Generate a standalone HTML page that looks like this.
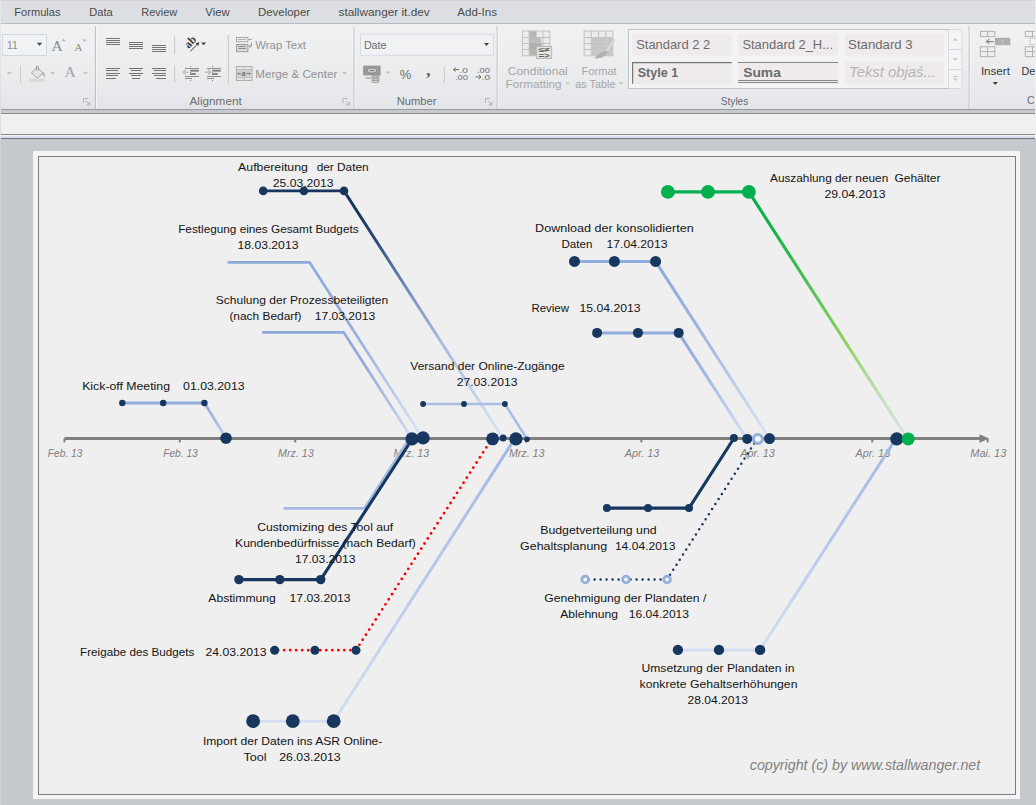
<!DOCTYPE html>
<html><head><meta charset="utf-8"><title>Timeline</title>
<style>
html,body{margin:0;padding:0;}
body{width:1036px;height:805px;overflow:hidden;background:#c5c8cd;font-family:"Liberation Sans",sans-serif;position:relative;}
.abs{position:absolute;}
#tabs{left:0;top:0;width:1036px;height:23px;background:linear-gradient(#d2d3d5 0,#d2d3d5 1px,#dddfe3 1px,#dbdee2);}
#rib{left:0;top:23px;width:1036px;height:86px;background:linear-gradient(#f0f1f3,#eceef0 40%,#e6e8eb 85%,#e2e4e8);border-top:1px solid #b8bcc4;box-sizing:border-box;}
#ribb{left:0;top:109px;width:1036px;height:5px;background:linear-gradient(#999ca2 0,#999ca2 20%,#c4c8ce 20%,#c8ccd2 80%,#8a8c90 80%);}
#fbar{left:0;top:114px;width:1036px;height:20px;background:#f0f0f0;}
#fbb{left:0;top:134px;width:1036px;height:5px;background:linear-gradient(#85878c 0,#85878c 20%,#f2f2f3 20%,#f2f2f3 40%,#dcdff0 40%,#dcdff0 80%,#707070 80%);}
#sheet{left:33px;top:151px;width:987px;height:648px;background:#f4f4f4;}
#chartbox{left:38px;top:156px;width:978px;height:639px;box-sizing:border-box;border:1px solid #7c7c7c;background:#efefef;}
#ledge{left:0;top:0;width:1px;height:805px;background:linear-gradient(#e6e8ea 0,#dcdde0 139px,#cdd0d4 139px);}
#redge{left:1035px;top:0;width:1px;height:139px;background:#eef0f3;}
svg.chart{position:absolute;left:0;top:0;}
svg text{font-family:"Liberation Sans",sans-serif;}
svg text.sf{font-family:"Liberation Serif",serif;}

</style></head><body>
<div class="abs" id="tabs"></div>
<div class="abs" id="rib"></div>
<div class="abs" id="ribb"></div>
<div class="abs" id="fbar"></div>
<div class="abs" id="fbb"></div>
<div class="abs" id="sheet"></div>
<div class="abs" id="chartbox"></div>
<svg class="chart" width="1036" height="140" viewBox="0 0 1036 140" fill="none"><text x="14.3" y="15.7" textLength="46.2" lengthAdjust="spacingAndGlyphs" font-size="11" fill="#4b4b4b" >Formulas</text><text x="89.3" y="15.7" textLength="23.4" lengthAdjust="spacingAndGlyphs" font-size="11" fill="#4b4b4b" >Data</text><text x="141.3" y="15.7" textLength="35.9" lengthAdjust="spacingAndGlyphs" font-size="11" fill="#4b4b4b" >Review</text><text x="205.3" y="15.7" textLength="24.6" lengthAdjust="spacingAndGlyphs" font-size="11" fill="#4b4b4b" >View</text><text x="258.0" y="15.7" textLength="52.1" lengthAdjust="spacingAndGlyphs" font-size="11" fill="#4b4b4b" >Developer</text><text x="338.5" y="15.7" textLength="91.2" lengthAdjust="spacingAndGlyphs" font-size="11" fill="#4b4b4b" >stallwanger it.dev</text><text x="457.3" y="15.7" textLength="39.7" lengthAdjust="spacingAndGlyphs" font-size="11" fill="#4b4b4b" >Add-Ins</text><path d="M95.4 26.0 V109.0" stroke="#b4b8be" stroke-width="1"/><path d="M96.4 25.0 V109.0" stroke="#f6f7f8" stroke-width="1"/><path d="M354.2 26.0 V109.0" stroke="#b4b8be" stroke-width="1"/><path d="M355.2 25.0 V109.0" stroke="#f6f7f8" stroke-width="1"/><path d="M497.2 26.0 V109.0" stroke="#b4b8be" stroke-width="1"/><path d="M498.2 25.0 V109.0" stroke="#f6f7f8" stroke-width="1"/><path d="M969.2 26.0 V109.0" stroke="#b4b8be" stroke-width="1"/><path d="M970.2 25.0 V109.0" stroke="#f6f7f8" stroke-width="1"/><rect x="2.5" y="34.5" width="44.0" height="21.0" fill="#f1f2f4" stroke="#d0d7e3" stroke-width="1" rx="0" /><path d="M2.5 34.5 V55.5" stroke="#d5dbe6" stroke-width="1"/><text x="7.0" y="48.7" textLength="10.6" lengthAdjust="spacingAndGlyphs" font-size="10.7" fill="#8c8c8c" >11</text><path d="M36.8 42.8 L42.2 42.8 L39.5 45.8 Z" fill="#404040"/><text x="51.6" y="50.7" class="sf" font-size="15.5" fill="#8a8a8a">A</text><path d="M61.4 41.2 L65.8 41.2 L63.6 38.8 Z" fill="#b4b4b4"/><text x="74.6" y="50.7" class="sf" font-size="11" fill="#8a8a8a">A</text><path d="M82.2 39.4 L86.6 39.4 L84.4 41.8 Z" fill="#b4b4b4"/><path d="M6.9 71.9 L11.9 71.9 L9.4 74.7 Z" fill="#c4c4c4"/><path d="M20.5 66.0 V83.0" stroke="#cdcdcd" stroke-width="1"/><g stroke="#a2a2a2" stroke-width="1" fill="#e4e4e4"><path d="M31.5 72.8 L37.2 67.2 L43.2 73 L37.6 78.2 Z"/><path d="M36.3 70.5 V66.6 Q37.4 65.2 38.5 66.6 V70.5" fill="none"/></g><path d="M43 72 Q45.5 73 44.6 77.5 Q42.6 76 43 72 Z" fill="#a8a8a8"/><rect x="29.0" y="78.6" width="15.8" height="3.2" fill="#ddd6da" stroke="none" stroke-width="1" rx="0" /><path d="M49.9 71.9 L54.9 71.9 L52.4 74.7 Z" fill="#c4c4c4"/><text x="64.6" y="76.7" class="sf" font-size="15.5" fill="#a4a4a4">A</text><path d="M83.1 71.9 L88.1 71.9 L85.6 74.7 Z" fill="#c4c4c4"/><path d="M83.5 103.0 V98.5 H88.0" fill="none" stroke="#b4b4b4" stroke-width="1"/><path d="M86.0 101.0 L89.5 104.5 M89.8 101.7 V104.8 H86.7" fill="none" stroke="#b0b0b0" stroke-width="1"/><path d="M106.2 38.5 H120.1" stroke="#747474" stroke-width="1" shape-rendering="crispEdges"/><path d="M106.2 40.6 H120.1" stroke="#747474" stroke-width="1" shape-rendering="crispEdges"/><path d="M106.2 42.6 H120.1" stroke="#747474" stroke-width="1" shape-rendering="crispEdges"/><path d="M106.2 44.6 H120.1" stroke="#747474" stroke-width="1" shape-rendering="crispEdges"/><path d="M129.0 42.6 H142.9" stroke="#747474" stroke-width="1" shape-rendering="crispEdges"/><path d="M129.0 44.6 H142.9" stroke="#747474" stroke-width="1" shape-rendering="crispEdges"/><path d="M129.0 46.6 H142.9" stroke="#747474" stroke-width="1" shape-rendering="crispEdges"/><path d="M129.0 48.6 H142.9" stroke="#747474" stroke-width="1" shape-rendering="crispEdges"/><path d="M152.0 45.5 H166.1" stroke="#747474" stroke-width="1" shape-rendering="crispEdges"/><path d="M152.0 47.5 H166.1" stroke="#747474" stroke-width="1" shape-rendering="crispEdges"/><path d="M152.0 49.5 H166.1" stroke="#747474" stroke-width="1" shape-rendering="crispEdges"/><path d="M152.0 51.5 H166.1" stroke="#747474" stroke-width="1" shape-rendering="crispEdges"/><path d="M106.2 68.5 H120.1" stroke="#747474" stroke-width="1" shape-rendering="crispEdges"/><path d="M106.2 70.9 H117.8" stroke="#747474" stroke-width="1" shape-rendering="crispEdges"/><path d="M106.2 73.3 H120.1" stroke="#747474" stroke-width="1" shape-rendering="crispEdges"/><path d="M106.2 75.8 H117.8" stroke="#747474" stroke-width="1" shape-rendering="crispEdges"/><path d="M106.2 78.2 H115.5" stroke="#747474" stroke-width="1" shape-rendering="crispEdges"/><path d="M129.0 68.5 H142.9" stroke="#747474" stroke-width="1" shape-rendering="crispEdges"/><path d="M130.9 70.9 H141.0" stroke="#747474" stroke-width="1" shape-rendering="crispEdges"/><path d="M129.0 73.3 H142.9" stroke="#747474" stroke-width="1" shape-rendering="crispEdges"/><path d="M130.9 75.8 H141.0" stroke="#747474" stroke-width="1" shape-rendering="crispEdges"/><path d="M131.7 78.2 H140.2" stroke="#747474" stroke-width="1" shape-rendering="crispEdges"/><path d="M152.0 68.5 H166.1" stroke="#747474" stroke-width="1" shape-rendering="crispEdges"/><path d="M154.4 70.9 H166.1" stroke="#747474" stroke-width="1" shape-rendering="crispEdges"/><path d="M152.0 73.3 H166.1" stroke="#747474" stroke-width="1" shape-rendering="crispEdges"/><path d="M154.4 75.8 H166.1" stroke="#747474" stroke-width="1" shape-rendering="crispEdges"/><path d="M156.4 78.2 H166.1" stroke="#747474" stroke-width="1" shape-rendering="crispEdges"/><path d="M174.6 36.5 V54.3" stroke="#c6c6c6" stroke-width="1"/><path d="M174.6 65.0 V82.8" stroke="#c6c6c6" stroke-width="1"/><text transform="translate(188.4,48.9) rotate(-45)" class="sf" font-size="11.5" font-weight="bold" fill="#3a3a3a">ab</text><path d="M190.3 51.4 L198.6 43" stroke="#3a3a3a" stroke-width="1" fill="none"/><path d="M199.3 42.3 L195.6 43.2 L198.4 46 Z" fill="#3a3a3a"/><path d="M201.1 42.5 L206.1 42.5 L203.6 45.3 Z" fill="#444"/><path d="M190.5 66 V81" stroke="#7c7c7c" stroke-width="1" stroke-dasharray="1 1" shape-rendering="crispEdges"/><path d="M185.0 68.1 H198.8" stroke="#8e8e8e" stroke-width="1" shape-rendering="crispEdges"/><path d="M190.4 70.7 H198.8" stroke="#7a7a7a" stroke-width="1.8"/><path d="M190.4 74.0 H195.8" stroke="#7a7a7a" stroke-width="1.8"/><path d="M185.0 76.5 H198.8" stroke="#8e8e8e" stroke-width="1" shape-rendering="crispEdges"/><path d="M185.0 78.7 H192.0" stroke="#8e8e8e" stroke-width="1" shape-rendering="crispEdges"/><path d="M183.4 72.3 H188.6 M185.8 69.9 L183.2 72.3 L185.8 74.7" stroke="#c2c2c2" stroke-width="1.6" fill="none"/><path d="M212.5 66 V81" stroke="#7c7c7c" stroke-width="1" stroke-dasharray="1 1" shape-rendering="crispEdges"/><path d="M207.0 68.1 H220.8" stroke="#8e8e8e" stroke-width="1" shape-rendering="crispEdges"/><path d="M212.4 70.7 H220.8" stroke="#7a7a7a" stroke-width="1.8"/><path d="M212.4 74.0 H217.8" stroke="#7a7a7a" stroke-width="1.8"/><path d="M207.0 76.5 H220.8" stroke="#8e8e8e" stroke-width="1" shape-rendering="crispEdges"/><path d="M207.0 78.7 H214.0" stroke="#8e8e8e" stroke-width="1" shape-rendering="crispEdges"/><path d="M205.0 72.3 H210.2 M208.0 69.9 L210.6 72.3 L208.0 74.7" stroke="#c2c2c2" stroke-width="1.6" fill="none"/><path d="M228.3 35.0 V84.4" stroke="#c6c6c6" stroke-width="1"/><rect x="236.5" y="37.5" width="11.4" height="4.2" fill="#f0f0f0" stroke="#a8a8a8" stroke-width="1" rx="0" /><path d="M238.2 39.6 H246.4" stroke="#b0b0b0" stroke-width="1" shape-rendering="crispEdges"/><path d="M247.9 39.6 H251.8" stroke="#a8a8a8" stroke-width="1" shape-rendering="crispEdges"/><rect x="236.5" y="44.5" width="11.4" height="7.2" fill="#dadada" stroke="#9c9c9c" stroke-width="1" rx="0" /><path d="M238.3 46.8 H246.0" stroke="#8c8c8c" stroke-width="1" shape-rendering="crispEdges"/><path d="M238.3 48.8 H246.0" stroke="#8c8c8c" stroke-width="1" shape-rendering="crispEdges"/><path d="M251.6 42.5 V46.3 H249 M250.6 44.8 L249 46.3 L250.6 47.8" stroke="#9a9a9a" stroke-width="1" fill="none"/><text x="255.3" y="49.0" textLength="50.7" lengthAdjust="spacingAndGlyphs" font-size="10.8" fill="#929292" >Wrap Text</text><rect x="236.4" y="66.6" width="15.6" height="13.8" fill="#e9e9e9" stroke="#a8a8a8" stroke-width="1" rx="0" /><path d="M236.4 69.8 H252.0" stroke="#b8b8b8" stroke-width="1" shape-rendering="crispEdges"/><path d="M236.4 77.2 H252.0" stroke="#b8b8b8" stroke-width="1" shape-rendering="crispEdges"/><path d="M244.1 66.6 V69.8" stroke="#b8b8b8" stroke-width="1"/><path d="M244.1 77.2 V80.4" stroke="#b8b8b8" stroke-width="1"/><rect x="236.9" y="70.3" width="14.6" height="6.4" fill="#cdcdcd" stroke="none" stroke-width="1" rx="0" /><text x="241.6" y="76.2" class="sf" font-size="8" font-weight="bold" fill="#707070">a</text><path d="M237.6 73.5 H240.6 M246.6 73.5 H250.6" stroke="#808080" stroke-width="1"/><path d="M237.4 73.5 L239 72.3 V74.7 Z M250.9 73.5 L249.3 72.3 V74.7 Z" fill="#808080"/><text x="255.3" y="77.9" textLength="82.0" lengthAdjust="spacingAndGlyphs" font-size="10.8" fill="#929292" >Merge &amp; Center</text><path d="M342.1 71.9 L347.1 71.9 L344.6 74.7 Z" fill="#c4c4c4"/><text x="189.5" y="104.6" textLength="52.2" lengthAdjust="spacingAndGlyphs" font-size="10.6" fill="#6e6e6e" >Alignment</text><path d="M343.0 103.0 V98.5 H347.5" fill="none" stroke="#b4b4b4" stroke-width="1"/><path d="M345.5 101.0 L349.0 104.5 M349.3 101.7 V104.8 H346.2" fill="none" stroke="#b0b0b0" stroke-width="1"/><rect x="360.5" y="34.2" width="133.0" height="21.0" fill="#f1f2f4" stroke="#d6dbe4" stroke-width="1" rx="0" /><text x="363.9" y="49.0" textLength="22.6" lengthAdjust="spacingAndGlyphs" font-size="10.8" fill="#6c6c6c" >Date</text><path d="M484.0 43.1 L489.0 43.1 L486.5 45.9 Z" fill="#444"/><rect x="363.8" y="66.2" width="16.2" height="8.6" fill="#9c9c9c" stroke="#8a8a8a" stroke-width="1" rx="0" /><ellipse cx="371.9" cy="70.5" rx="4.6" ry="2.6" fill="#c9c9c9" stroke="#7c7c7c" stroke-width="0.8"/><path d="M370 70.5 h3.8" stroke="#7c7c7c" stroke-width="1"/><ellipse cx="375.5" cy="76.2" rx="3.8" ry="1.1" fill="#d8d8d8" stroke="#8c8c8c" stroke-width="0.8"/><ellipse cx="375.5" cy="78.0" rx="3.8" ry="1.1" fill="#d8d8d8" stroke="#8c8c8c" stroke-width="0.8"/><ellipse cx="375.5" cy="79.8" rx="3.8" ry="1.1" fill="#d8d8d8" stroke="#8c8c8c" stroke-width="0.8"/><ellipse cx="375.5" cy="81.4" rx="3.8" ry="1.1" fill="#d8d8d8" stroke="#8c8c8c" stroke-width="0.8"/><path d="M365.5 78.0 H371.0" stroke="#a0a0a0" stroke-width="1.2"/><path d="M385.2 71.4 L390.2 71.4 L387.7 74.2 Z" fill="#c4c4c4"/><text x="399.8" y="78.9" textLength="11.5" lengthAdjust="spacingAndGlyphs" font-size="13.4" fill="#6a6a6a" >%</text><text x="426.2" y="76.4" class="sf" font-size="17" font-weight="bold" fill="#5a5a5a">,</text><path d="M444.3 66.3 V83.0" stroke="#c6c6c6" stroke-width="1"/><text x="459.5" y="73" font-size="7.6" fill="#6a6a6a" textLength="8.4" lengthAdjust="spacingAndGlyphs">.0</text><text x="455" y="80.2" font-size="7.6" fill="#6a6a6a" textLength="13" lengthAdjust="spacingAndGlyphs">.00</text><path d="M453.5 69.6 H459 M455.8 67.6 L453.5 69.6 L455.8 71.6" stroke="#6a6a6a" stroke-width="1" fill="none"/><text x="477" y="73" font-size="7.6" fill="#6a6a6a" textLength="13" lengthAdjust="spacingAndGlyphs">.00</text><text x="481.7" y="80.2" font-size="7.6" fill="#6a6a6a" textLength="8.4" lengthAdjust="spacingAndGlyphs">.0</text><path d="M475.5 77 H481 M478.7 75 L481 77 L478.7 79" stroke="#6a6a6a" stroke-width="1" fill="none"/><text x="396.7" y="104.6" textLength="39.9" lengthAdjust="spacingAndGlyphs" font-size="10.6" fill="#6a6a72" >Number</text><path d="M485.5 103.0 V98.5 H490.0" fill="none" stroke="#b4b4b4" stroke-width="1"/><path d="M488.0 101.0 L491.5 104.5 M491.8 101.7 V104.8 H488.7" fill="none" stroke="#b0b0b0" stroke-width="1"/><rect x="522.3" y="31.0" width="27.6" height="24.8" fill="#ebebeb" stroke="#c2c2c2" stroke-width="1" rx="0" /><path d="M529.2 31.0 V55.8" stroke="#c2c2c2" stroke-width="1"/><path d="M536.1 31.0 V55.8" stroke="#c2c2c2" stroke-width="1"/><path d="M543.0 31.0 V55.8" stroke="#c2c2c2" stroke-width="1"/><path d="M522.3 37.2 H549.9" stroke="#c2c2c2" stroke-width="1" shape-rendering="crispEdges"/><path d="M522.3 43.4 H549.9" stroke="#c2c2c2" stroke-width="1" shape-rendering="crispEdges"/><path d="M522.3 49.6 H549.9" stroke="#c2c2c2" stroke-width="1" shape-rendering="crispEdges"/><rect x="529.4" y="31.2" width="6.8" height="24.5" fill="#b6b6b6" stroke="none" stroke-width="1" rx="0" /><rect x="529.4" y="37.4" width="11.8" height="5.8" fill="#bdbdbd" stroke="none" stroke-width="1" rx="0" /><rect x="529.4" y="43.6" width="12.5" height="5.8" fill="#b0b0b0" stroke="none" stroke-width="1" rx="0" /><rect x="536.6" y="46.5" width="15.0" height="12.0" fill="#e6e6e6" stroke="#b4b4b4" stroke-width="1" rx="0" /><text x="538.4" y="52.2" font-size="6.6" font-weight="bold" fill="#585858" textLength="11.4" lengthAdjust="spacingAndGlyphs">≤≠</text><text x="538.4" y="57.6" font-size="6.6" font-weight="bold" fill="#585858" textLength="11.4" lengthAdjust="spacingAndGlyphs">=&gt;</text><text x="507.8" y="74.7" textLength="60.0" lengthAdjust="spacingAndGlyphs" font-size="10.6" fill="#a6a6a6" >Conditional</text><text x="505.6" y="87.7" textLength="55.9" lengthAdjust="spacingAndGlyphs" font-size="10.6" fill="#a6a6a6" >Formatting</text><path d="M565.0 82.3 L570.0 82.3 L567.5 85.1 Z" fill="#cacaca"/><rect x="584.1" y="31.0" width="28.8" height="24.8" fill="#ebebeb" stroke="#c2c2c2" stroke-width="1" rx="0" /><path d="M591.3 31.0 V55.8" stroke="#c2c2c2" stroke-width="1"/><path d="M598.5 31.0 V55.8" stroke="#c2c2c2" stroke-width="1"/><path d="M605.7 31.0 V55.8" stroke="#c2c2c2" stroke-width="1"/><path d="M584.1 37.2 H612.9" stroke="#c2c2c2" stroke-width="1" shape-rendering="crispEdges"/><path d="M584.1 43.4 H612.9" stroke="#c2c2c2" stroke-width="1" shape-rendering="crispEdges"/><path d="M584.1 49.6 H612.9" stroke="#c2c2c2" stroke-width="1" shape-rendering="crispEdges"/><rect x="591.9" y="37.8" width="6.0" height="5.0" fill="#c6c6c6" stroke="none" stroke-width="1" rx="0" /><rect x="591.9" y="44.0" width="6.0" height="5.0" fill="#c6c6c6" stroke="none" stroke-width="1" rx="0" /><rect x="591.9" y="50.2" width="6.0" height="5.0" fill="#c6c6c6" stroke="none" stroke-width="1" rx="0" /><rect x="599.1" y="37.8" width="6.0" height="5.0" fill="#c6c6c6" stroke="none" stroke-width="1" rx="0" /><rect x="599.1" y="44.0" width="6.0" height="5.0" fill="#c6c6c6" stroke="none" stroke-width="1" rx="0" /><rect x="599.1" y="50.2" width="6.0" height="5.0" fill="#c6c6c6" stroke="none" stroke-width="1" rx="0" /><rect x="606.3" y="37.8" width="6.0" height="5.0" fill="#c6c6c6" stroke="none" stroke-width="1" rx="0" /><rect x="606.3" y="44.0" width="6.0" height="5.0" fill="#c6c6c6" stroke="none" stroke-width="1" rx="0" /><rect x="606.3" y="50.2" width="6.0" height="5.0" fill="#c6c6c6" stroke="none" stroke-width="1" rx="0" /><path d="M613.6 39 L605 51.5 L607.5 53 L614.6 41 Z" fill="#dcdcdc" stroke="#c4c4c4" stroke-width="0.6"/><path d="M606 50.5 Q600 52 594 58.5 Q603 59.5 608.5 52.3 Z" fill="#b2b2b2"/><text x="581.6" y="74.7" textLength="35.1" lengthAdjust="spacingAndGlyphs" font-size="10.6" fill="#a6a6a6" >Format</text><text x="575.3" y="87.7" textLength="40.1" lengthAdjust="spacingAndGlyphs" font-size="10.6" fill="#a6a6a6" >as Table</text><path d="M618.6 82.3 L623.6 82.3 L621.1 85.1 Z" fill="#cacaca"/><rect x="628.5" y="29.5" width="320.0" height="59.0" fill="#f3f3f4" stroke="#bfc3c9" stroke-width="1" rx="0" /><path d="M948.5 29.5 H959.5 Q962 29.5 962 32 V86 Q962 88.5 959.5 88.5 H948.5" fill="#f3f4f5" stroke="#d3d8e0" stroke-width="1"/><path d="M948.5 49.5 H962.0" stroke="#d3d8e0" stroke-width="1" shape-rendering="crispEdges"/><path d="M948.5 69.3 H962.0" stroke="#d3d8e0" stroke-width="1" shape-rendering="crispEdges"/><path d="M952.8 40.8 L957.8 40.8 L955.3 38.0 Z" fill="#c8c8c8"/><path d="M952.8 58.0 L957.8 58.0 L955.3 60.8 Z" fill="#c8c8c8"/><path d="M952.6 76.0 H958.0" stroke="#c8c8c8" stroke-width="1" shape-rendering="crispEdges"/><path d="M952.8 78.4 L957.8 78.4 L955.3 81.2 Z" fill="#c8c8c8"/><rect x="632.0" y="33.6" width="99.8" height="22.0" fill="#efebed" stroke="none" stroke-width="1" rx="0" /><rect x="738.3" y="33.6" width="99.8" height="22.0" fill="#efebed" stroke="none" stroke-width="1" rx="0" /><rect x="844.6" y="33.6" width="99.4" height="22.0" fill="#efebed" stroke="none" stroke-width="1" rx="0" /><rect x="632.0" y="61.6" width="99.8" height="22.4" fill="#efebed" stroke="none" stroke-width="1" rx="0" /><rect x="738.3" y="61.6" width="99.8" height="22.4" fill="#efebed" stroke="none" stroke-width="1" rx="0" /><rect x="844.6" y="61.6" width="99.4" height="22.4" fill="#efebed" stroke="none" stroke-width="1" rx="0" /><text x="636.2" y="49.0" textLength="73.9" lengthAdjust="spacingAndGlyphs" font-size="13.2" fill="#6c6c6c" >Standard 2 2</text><text x="742.4" y="49.0" textLength="90.6" lengthAdjust="spacingAndGlyphs" font-size="13.2" fill="#6c6c6c" >Standard 2_H...</text><text x="848.1" y="49.0" textLength="64.6" lengthAdjust="spacingAndGlyphs" font-size="13.2" fill="#6c6c6c" >Standard 3</text><path d="M632.6 83.8 V62.6 H731.8" fill="none" stroke="#777" stroke-width="1.2"/><text x="637.7" y="76.5" textLength="40.5" lengthAdjust="spacingAndGlyphs" font-size="13.2" fill="#6a6a6a" font-weight="bold">Style 1</text><path d="M738.3 62.6 H838.1" stroke="#8a8a8a" stroke-width="1" shape-rendering="crispEdges"/><path d="M738.3 80.4 H838.1" stroke="#8a8a8a" stroke-width="1" shape-rendering="crispEdges"/><path d="M738.3 82.8 H838.1" stroke="#8a8a8a" stroke-width="1" shape-rendering="crispEdges"/><text x="743.2" y="76.5" textLength="37.7" lengthAdjust="spacingAndGlyphs" font-size="13.2" fill="#6a6a6a" font-weight="bold">Suma</text><text x="849.0" y="76.5" textLength="86.8" lengthAdjust="spacingAndGlyphs" font-size="14.4" fill="#b4b4b4" font-style="italic">Tekst objaś...</text><text x="720.8" y="104.6" textLength="27.5" lengthAdjust="spacingAndGlyphs" font-size="10.6" fill="#6a6a72" >Styles</text><rect x="980.4" y="31.4" width="14.4" height="5.2" fill="#efefef" stroke="#b2b2b2" stroke-width="1" rx="0" /><path d="M987.6 31.4 V36.6" stroke="#b2b2b2" stroke-width="1"/><rect x="995.4" y="38.3" width="14.4" height="6.4" fill="#b0b0b0" stroke="#a8a8a8" stroke-width="1" rx="0" /><path d="M1002.6 38.3 V44.7" stroke="#c4c4c4" stroke-width="1"/><rect x="980.4" y="46.8" width="14.4" height="9.8" fill="#efefef" stroke="#b2b2b2" stroke-width="1" rx="0" /><path d="M987.6 46.8 V56.6" stroke="#b2b2b2" stroke-width="1"/><path d="M980.4 51.7 H994.8" stroke="#b2b2b2" stroke-width="1" shape-rendering="crispEdges"/><path d="M986.6 41.6 H993.8 M989.2 39.3 L986.4 41.6 L989.2 43.9" stroke="#8c8c8c" stroke-width="1.2" fill="none"/><text x="980.9" y="74.7" textLength="29.0" lengthAdjust="spacingAndGlyphs" font-size="10.8" fill="#383838" >Insert</text><path d="M992.6 82.1 L998.0 82.1 L995.3 85.1 Z" fill="#444"/><rect x="1025.3" y="31.4" width="14.4" height="5.2" fill="#efefef" stroke="#b2b2b2" stroke-width="1" rx="0" /><path d="M1032.5 31.4 V36.6" stroke="#b2b2b2" stroke-width="1"/><rect x="1030.2" y="38.3" width="10" height="6.4" fill="#f4f4f4" stroke="#a0a0a0" stroke-dasharray="1 1"/><rect x="1025.3" y="46.8" width="14.4" height="9.8" fill="#efefef" stroke="#b2b2b2" stroke-width="1" rx="0" /><path d="M1032.5 46.8 V56.6" stroke="#b2b2b2" stroke-width="1"/><path d="M1025.3 51.7 H1040.0" stroke="#b2b2b2" stroke-width="1" shape-rendering="crispEdges"/><text x="1021.4" y="74.7" font-size="10.8" fill="#383838">De</text><text x="1027" y="104.3" font-size="10.6" fill="#6a6a72">Ce</text></svg><svg class="chart" width="1036" height="805" viewBox="0 0 1036 805"><defs><filter id="soft" x="-20%" y="-20%" width="140%" height="140%"><feGaussianBlur stdDeviation="0.7"/></filter><linearGradient id="g1" gradientUnits="userSpaceOnUse" x1="0" y1="262" x2="0" y2="438"><stop offset="0" stop-color="#8faadc"/><stop offset="0.35" stop-color="#8faadc"/><stop offset="1" stop-color="#dbe4f4"/></linearGradient><linearGradient id="g2" gradientUnits="userSpaceOnUse" x1="0" y1="332" x2="0" y2="438"><stop offset="0" stop-color="#8faadc"/><stop offset="0.3" stop-color="#8faadc"/><stop offset="1" stop-color="#cdd9ef"/></linearGradient><linearGradient id="g3" gradientUnits="userSpaceOnUse" x1="0" y1="191" x2="0" y2="438"><stop offset="0" stop-color="#17375e"/><stop offset="0.1" stop-color="#17375e"/><stop offset="0.2" stop-color="#2c4877"/><stop offset="0.32" stop-color="#5a74a4"/><stop offset="0.45" stop-color="#8199c8"/><stop offset="0.6" stop-color="#a4b9e0"/><stop offset="1" stop-color="#dbe4f4"/></linearGradient><linearGradient id="g4" gradientUnits="userSpaceOnUse" x1="0" y1="403" x2="0" y2="438"><stop offset="0" stop-color="#8faadc"/><stop offset="1" stop-color="#c3d1ec"/></linearGradient><linearGradient id="g5" gradientUnits="userSpaceOnUse" x1="0" y1="404" x2="0" y2="438"><stop offset="0" stop-color="#a9bee2"/><stop offset="1" stop-color="#a9bee2"/></linearGradient><linearGradient id="g6" gradientUnits="userSpaceOnUse" x1="0" y1="438" x2="0" y2="721"><stop offset="0" stop-color="#9fb8e4"/><stop offset="0.5" stop-color="#b7c9ea"/><stop offset="1" stop-color="#d3def1"/></linearGradient><linearGradient id="g7" gradientUnits="userSpaceOnUse" x1="0" y1="261" x2="0" y2="438"><stop offset="0" stop-color="#8faadc"/><stop offset="0.35" stop-color="#9ab2df"/><stop offset="1" stop-color="#dbe4f4"/></linearGradient><linearGradient id="g8" gradientUnits="userSpaceOnUse" x1="0" y1="333" x2="0" y2="438"><stop offset="0" stop-color="#8faadc"/><stop offset="0.3" stop-color="#9ab2df"/><stop offset="1" stop-color="#d3def1"/></linearGradient><linearGradient id="g9" gradientUnits="userSpaceOnUse" x1="0" y1="438" x2="0" y2="650"><stop offset="0" stop-color="#9fb8e4"/><stop offset="0.5" stop-color="#b7c9ea"/><stop offset="1" stop-color="#d3def1"/></linearGradient><linearGradient id="g10" gradientUnits="userSpaceOnUse" x1="0" y1="192" x2="0" y2="438"><stop offset="0" stop-color="#00b050"/><stop offset="0.15" stop-color="#12b24c"/><stop offset="0.6" stop-color="#8fd05a"/><stop offset="0.85" stop-color="#c5dfc0"/><stop offset="1" stop-color="#d8e6e0"/></linearGradient></defs><path d="M64.4 438.5 H982" stroke="#7f7f7f" stroke-width="3" fill="none"/><path d="M979.5 434.2 L989 438.5 L979.5 442.8 Z" fill="#7f7f7f"/><path d="M64.4 438.5 V442.4" stroke="#7f7f7f" stroke-width="2"/><path d="M179.8 438.5 V442.4" stroke="#7f7f7f" stroke-width="2"/><path d="M295.2 438.5 V442.4" stroke="#7f7f7f" stroke-width="2"/><path d="M410.6 438.5 V442.4" stroke="#7f7f7f" stroke-width="2"/><path d="M526.0 438.5 V442.4" stroke="#7f7f7f" stroke-width="2"/><path d="M641.4 438.5 V442.4" stroke="#7f7f7f" stroke-width="2"/><path d="M756.8 438.5 V442.4" stroke="#7f7f7f" stroke-width="2"/><path d="M872.2 438.5 V442.4" stroke="#7f7f7f" stroke-width="2"/><path d="M987.6 438.5 V442.4" stroke="#7f7f7f" stroke-width="2"/><text x="47.8" y="456.8" textLength="34.6" lengthAdjust="spacingAndGlyphs" font-size="10.67" fill="#7f7f7f" font-style="italic" xml:space="preserve">Feb. 13</text><text x="163.2" y="456.8" textLength="34.6" lengthAdjust="spacingAndGlyphs" font-size="10.67" fill="#7f7f7f" font-style="italic" xml:space="preserve">Feb. 13</text><text x="278.1" y="456.8" textLength="35.6" lengthAdjust="spacingAndGlyphs" font-size="10.67" fill="#7f7f7f" font-style="italic" xml:space="preserve">Mrz. 13</text><text x="393.5" y="456.8" textLength="35.6" lengthAdjust="spacingAndGlyphs" font-size="10.67" fill="#7f7f7f" font-style="italic" xml:space="preserve">Mrz. 13</text><text x="508.9" y="456.8" textLength="35.6" lengthAdjust="spacingAndGlyphs" font-size="10.67" fill="#7f7f7f" font-style="italic" xml:space="preserve">Mrz. 13</text><text x="624.8" y="456.8" textLength="34.6" lengthAdjust="spacingAndGlyphs" font-size="10.67" fill="#7f7f7f" font-style="italic" xml:space="preserve">Apr. 13</text><text x="740.2" y="456.8" textLength="34.6" lengthAdjust="spacingAndGlyphs" font-size="10.67" fill="#7f7f7f" font-style="italic" xml:space="preserve">Apr. 13</text><text x="855.6" y="456.8" textLength="34.6" lengthAdjust="spacingAndGlyphs" font-size="10.67" fill="#7f7f7f" font-style="italic" xml:space="preserve">Apr. 13</text><text x="970.2" y="456.8" textLength="36.2" lengthAdjust="spacingAndGlyphs" font-size="10.67" fill="#7f7f7f" font-style="italic" xml:space="preserve">Mai. 13</text><path d="M283.6 508.4 L364.4 508.4 L409.5 438.5" fill="none" stroke="#a3b9e1" stroke-width="2.8" stroke-linejoin="round" /><path d="M227.6 262.4 L309.7 262.4 L422.9 438.5" fill="none" stroke="url(#g1)" stroke-width="2.7" stroke-linejoin="round" /><path d="M262.0 332.4 L343.8 332.4 L412.0 438.5" fill="none" stroke="url(#g2)" stroke-width="2.7" stroke-linejoin="round" /><path d="M263.2 190.9 L344.0 190.9 L503.1 438.5" fill="none" stroke="url(#g3)" stroke-width="2.9" stroke-linejoin="round" /><circle cx="263.2" cy="190.9" r="4.3" fill="#17375e" /><circle cx="303.9" cy="190.9" r="4.3" fill="#17375e" /><circle cx="344.0" cy="190.9" r="4.3" fill="#17375e" /><path d="M122.3 403.0 L204.4 403.0 L226.0 437.9" fill="none" stroke="url(#g4)" stroke-width="2.8" stroke-linejoin="round" /><circle cx="122.3" cy="403.0" r="3.2" fill="#17375e" /><circle cx="163.2" cy="403.0" r="3.2" fill="#17375e" /><circle cx="204.4" cy="403.0" r="3.2" fill="#17375e" /><path d="M423.1 404.0 L504.9 404.0 L527.0 439.0" fill="none" stroke="url(#g5)" stroke-width="2.6" stroke-linejoin="round" /><circle cx="423.1" cy="404.0" r="2.9" fill="#17375e" /><circle cx="464.0" cy="404.0" r="2.9" fill="#17375e" /><circle cx="504.9" cy="404.0" r="2.9" fill="#17375e" /><path d="M253.1 721.2 L333.7 721.2 L514.9 438.5" fill="none" stroke="url(#g6)" stroke-width="3" stroke-linejoin="round" /><circle cx="253.1" cy="721.2" r="6.9" fill="#17375e" /><circle cx="292.8" cy="721.2" r="6.9" fill="#17375e" /><circle cx="333.7" cy="721.2" r="6.9" fill="#17375e" /><path d="M274.6 650.2 L356.0 650.2 L492.0 438.5" fill="none" stroke="#ff0000" stroke-width="2.8" stroke-linejoin="round" stroke-dasharray="0 6.02" stroke-dashoffset="2.5" stroke-linecap="round"/><circle cx="274.6" cy="650.2" r="4.5" fill="#17375e" /><circle cx="314.9" cy="650.2" r="4.5" fill="#17375e" /><circle cx="356.0" cy="650.2" r="4.5" fill="#17375e" /><path d="M238.9 579.6 L320.7 579.6 L412.6 438.5" fill="none" stroke="#17375e" stroke-width="3.1" stroke-linejoin="round" /><circle cx="238.9" cy="579.6" r="4.7" fill="#17375e" /><circle cx="279.8" cy="579.6" r="4.7" fill="#17375e" /><circle cx="320.7" cy="579.6" r="4.7" fill="#17375e" /><path d="M574.5 261.4 L655.6 261.4 L769.4 438.5" fill="none" stroke="url(#g7)" stroke-width="3" stroke-linejoin="round" /><circle cx="574.5" cy="261.4" r="5.5" fill="#17375e" /><circle cx="614.4" cy="261.4" r="5.5" fill="#17375e" /><circle cx="655.6" cy="261.4" r="5.5" fill="#17375e" /><path d="M597.1 332.9 L678.7 332.9 L746.6 438.5" fill="none" stroke="url(#g8)" stroke-width="3" stroke-linejoin="round" /><circle cx="597.1" cy="332.9" r="5" fill="#17375e" /><circle cx="638.0" cy="332.9" r="5" fill="#17375e" /><circle cx="678.7" cy="332.9" r="5" fill="#17375e" /><path d="M677.9 649.9 L760.1 649.9 L896.0 438.5" fill="none" stroke="url(#g9)" stroke-width="3" stroke-linejoin="round" /><circle cx="677.9" cy="649.9" r="5.2" fill="#17375e" /><circle cx="719.0" cy="649.9" r="5.2" fill="#17375e" /><circle cx="760.1" cy="649.9" r="5.2" fill="#17375e" /><path d="M585.3 579.5 L667.0 579.5 L757.4 438.5" fill="none" stroke="#17375e" stroke-width="2.5" stroke-linejoin="round" stroke-dasharray="0 6" stroke-dashoffset="2.7" stroke-linecap="round"/><circle cx="585.2" cy="579.5" r="3.35" fill="#f3f4f6" stroke="#93aed8" stroke-width="2.8"/><circle cx="626.0" cy="579.5" r="3.35" fill="#f3f4f6" stroke="#93aed8" stroke-width="2.8"/><circle cx="667.1" cy="579.5" r="3.35" fill="#f3f4f6" stroke="#93aed8" stroke-width="2.8"/><path d="M606.9 508.1 L689.0 508.1 L733.8 438.5" fill="none" stroke="#17375e" stroke-width="3.1" stroke-linejoin="round" /><circle cx="606.9" cy="508.1" r="4" fill="#17375e" /><circle cx="648.0" cy="508.1" r="4" fill="#17375e" /><circle cx="689.0" cy="508.1" r="4" fill="#17375e" /><path d="M667.9 191.9 L748.9 191.9 L907.4 438.5" fill="none" stroke="url(#g10)" stroke-width="3.1" stroke-linejoin="round" /><circle cx="667.9" cy="191.9" r="6.9" fill="#06b050" filter="url(#soft)"/><circle cx="708.0" cy="191.9" r="6.9" fill="#06b050" filter="url(#soft)"/><circle cx="748.9" cy="191.9" r="6.9" fill="#06b050" filter="url(#soft)"/><circle cx="226.0" cy="438.2" r="5.8" fill="#17375e" /><circle cx="412.0" cy="438.9" r="6.6" fill="#17375e" /><circle cx="423.1" cy="437.9" r="6.6" fill="#17375e" /><circle cx="492.6" cy="438.9" r="6.4" fill="#17375e" /><circle cx="503.1" cy="437.9" r="3.5" fill="#17375e" /><circle cx="515.9" cy="438.9" r="6.6" fill="#17375e" /><circle cx="527.0" cy="439.3" r="2.8" fill="#17375e" /><circle cx="733.9" cy="437.9" r="4" fill="#17375e" /><circle cx="747.2" cy="438.9" r="5" fill="#17375e" /><circle cx="757.9" cy="438.9" r="4.5" fill="#f4f5f8" stroke="#93aed8" stroke-width="3"/><circle cx="769.5" cy="438.6" r="5.5" fill="#17375e" /><circle cx="896.8" cy="438.9" r="6.6" fill="#17375e" /><circle cx="908.2" cy="438.9" r="6.5" fill="#00b050" filter="url(#soft)"/><text x="238.1" y="171.3" textLength="69.8" lengthAdjust="spacingAndGlyphs" font-size="11.5" fill="#141414"  xml:space="preserve">Aufbereitung</text><text x="316.7" y="171.3" textLength="51.9" lengthAdjust="spacingAndGlyphs" font-size="11.5" fill="#141414"  xml:space="preserve">der Daten</text><text x="272.8" y="186.9" textLength="60.7" lengthAdjust="spacingAndGlyphs" font-size="11.5" fill="#141414"  xml:space="preserve">25.03.2013</text><text x="178.2" y="232.8" textLength="180.4" lengthAdjust="spacingAndGlyphs" font-size="11.5" fill="#141414"  xml:space="preserve">Festlegung eines Gesamt Budgets</text><text x="237.6" y="248.6" textLength="60.8" lengthAdjust="spacingAndGlyphs" font-size="11.5" fill="#141414"  xml:space="preserve">18.03.2013</text><text x="215.8" y="303.6" textLength="172.4" lengthAdjust="spacingAndGlyphs" font-size="11.5" fill="#141414"  xml:space="preserve">Schulung der Prozessbeteiligten</text><text x="229.4" y="319.9" textLength="72.2" lengthAdjust="spacingAndGlyphs" font-size="11.5" fill="#141414"  xml:space="preserve">(nach Bedarf)</text><text x="314.7" y="319.9" textLength="60.5" lengthAdjust="spacingAndGlyphs" font-size="11.5" fill="#141414"  xml:space="preserve">17.03.2013</text><text x="82.2" y="390.2" textLength="87.8" lengthAdjust="spacingAndGlyphs" font-size="11.5" fill="#141414"  xml:space="preserve">Kick-off Meeting</text><text x="183.1" y="390.2" textLength="61.5" lengthAdjust="spacingAndGlyphs" font-size="11.5" fill="#141414"  xml:space="preserve">01.03.2013</text><text x="410.3" y="370.1" textLength="154.3" lengthAdjust="spacingAndGlyphs" font-size="11.5" fill="#141414"  xml:space="preserve">Versand der Online-Zugänge</text><text x="456.7" y="385.9" textLength="60.7" lengthAdjust="spacingAndGlyphs" font-size="11.5" fill="#141414"  xml:space="preserve">27.03.2013</text><text x="257.2" y="530.9" textLength="136.0" lengthAdjust="spacingAndGlyphs" font-size="11.5" fill="#141414"  xml:space="preserve">Customizing des Tool auf</text><text x="235.1" y="547.3" textLength="180.7" lengthAdjust="spacingAndGlyphs" font-size="11.5" fill="#141414"  xml:space="preserve">Kundenbedürfnisse (nach Bedarf)</text><text x="294.9" y="562.8" textLength="60.7" lengthAdjust="spacingAndGlyphs" font-size="11.5" fill="#141414"  xml:space="preserve">17.03.2013</text><text x="208.3" y="602.2" textLength="67.5" lengthAdjust="spacingAndGlyphs" font-size="11.5" fill="#141414"  xml:space="preserve">Abstimmung</text><text x="289.6" y="602.2" textLength="61.0" lengthAdjust="spacingAndGlyphs" font-size="11.5" fill="#141414"  xml:space="preserve">17.03.2013</text><text x="80.1" y="656.0" textLength="114.3" lengthAdjust="spacingAndGlyphs" font-size="11.5" fill="#141414"  xml:space="preserve">Freigabe des Budgets</text><text x="205.5" y="656.0" textLength="61.1" lengthAdjust="spacingAndGlyphs" font-size="11.5" fill="#141414"  xml:space="preserve">24.03.2013</text><text x="202.9" y="744.8" textLength="179.5" lengthAdjust="spacingAndGlyphs" font-size="11.5" fill="#141414"  xml:space="preserve">Import der Daten ins ASR Online-</text><text x="243.4" y="760.6" textLength="23.2" lengthAdjust="spacingAndGlyphs" font-size="11.5" fill="#141414"  xml:space="preserve">Tool</text><text x="279.3" y="760.6" textLength="61.4" lengthAdjust="spacingAndGlyphs" font-size="11.5" fill="#141414"  xml:space="preserve">26.03.2013</text><text x="535.1" y="232.3" textLength="158.6" lengthAdjust="spacingAndGlyphs" font-size="11.5" fill="#141414"  xml:space="preserve">Download der konsolidierten</text><text x="561.5" y="247.9" textLength="30.8" lengthAdjust="spacingAndGlyphs" font-size="11.5" fill="#141414"  xml:space="preserve">Daten</text><text x="606.6" y="247.9" textLength="60.8" lengthAdjust="spacingAndGlyphs" font-size="11.5" fill="#141414"  xml:space="preserve">17.04.2013</text><text x="531.4" y="311.9" textLength="37.6" lengthAdjust="spacingAndGlyphs" font-size="11.5" fill="#141414"  xml:space="preserve">Review</text><text x="579.5" y="311.9" textLength="61.0" lengthAdjust="spacingAndGlyphs" font-size="11.5" fill="#141414"  xml:space="preserve">15.04.2013</text><text x="770.0" y="182.1" textLength="118.2" lengthAdjust="spacingAndGlyphs" font-size="11.5" fill="#141414"  xml:space="preserve">Auszahlung der neuen</text><text x="894.4" y="182.1" textLength="46.0" lengthAdjust="spacingAndGlyphs" font-size="11.5" fill="#141414"  xml:space="preserve">Gehälter</text><text x="824.4" y="197.7" textLength="61.3" lengthAdjust="spacingAndGlyphs" font-size="11.5" fill="#141414"  xml:space="preserve">29.04.2013</text><text x="540.2" y="534.0" textLength="116.4" lengthAdjust="spacingAndGlyphs" font-size="11.5" fill="#141414"  xml:space="preserve">Budgetverteilung und</text><text x="520.1" y="549.8" textLength="87.1" lengthAdjust="spacingAndGlyphs" font-size="11.5" fill="#141414"  xml:space="preserve">Gehaltsplanung</text><text x="614.9" y="549.8" textLength="60.5" lengthAdjust="spacingAndGlyphs" font-size="11.5" fill="#141414"  xml:space="preserve">14.04.2013</text><text x="544.2" y="602.0" textLength="162.1" lengthAdjust="spacingAndGlyphs" font-size="11.5" fill="#141414"  xml:space="preserve">Genehmigung der Plandaten /</text><text x="560.2" y="617.8" textLength="57.8" lengthAdjust="spacingAndGlyphs" font-size="11.5" fill="#141414"  xml:space="preserve">Ablehnung</text><text x="628.8" y="617.8" textLength="60.2" lengthAdjust="spacingAndGlyphs" font-size="11.5" fill="#141414"  xml:space="preserve">16.04.2013</text><text x="641.5" y="672.1" textLength="152.9" lengthAdjust="spacingAndGlyphs" font-size="11.5" fill="#141414"  xml:space="preserve">Umsetzung der Plandaten in</text><text x="639.6" y="687.9" textLength="157.9" lengthAdjust="spacingAndGlyphs" font-size="11.5" fill="#141414"  xml:space="preserve">konkrete Gehaltserhöhungen</text><text x="687.5" y="703.9" textLength="60.5" lengthAdjust="spacingAndGlyphs" font-size="11.5" fill="#141414"  xml:space="preserve">28.04.2013</text><text x="749.8" y="769.6" textLength="230.4" lengthAdjust="spacingAndGlyphs" font-size="14.4" fill="#808080" font-style="italic" xml:space="preserve">copyright (c) by www.stallwanger.net</text></svg>
<div class="abs" id="ledge"></div><div class="abs" id="redge"></div>
</body></html>
